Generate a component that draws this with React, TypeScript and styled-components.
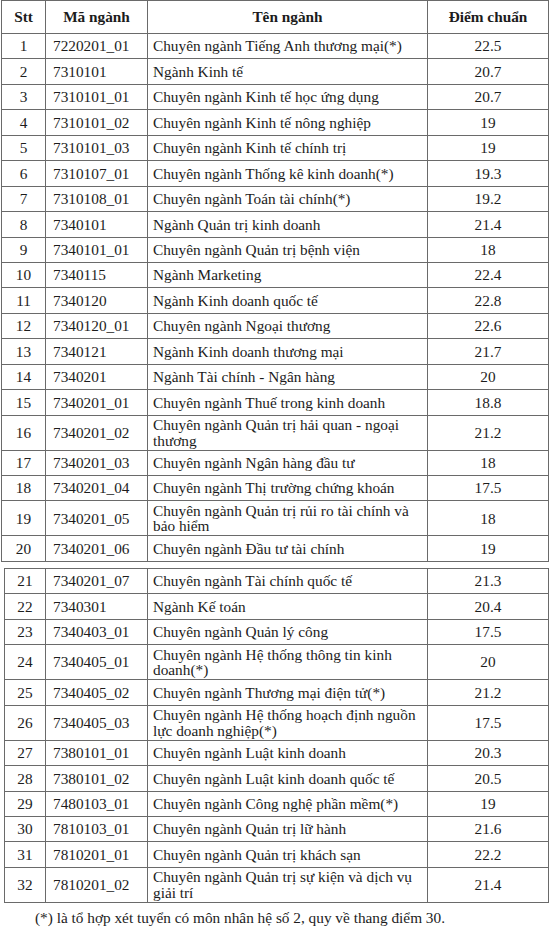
import React from "react";
import styled, { createGlobalStyle } from "styled-components";

const GlobalStyle = createGlobalStyle`
  html, body { margin: 0; padding: 0; background: #ffffff; }
  body { font-family: "Liberation Serif", "Times New Roman", serif; color: #1c1c1c; }
`;

type Row = { stt: number; code: string; name: string[]; score: string };

const part1: Row[] = [
  { stt: 1, code: "7220201_01", name: ["Chuyên ngành Tiếng Anh thương mại(*)"], score: "22.5" },
  { stt: 2, code: "7310101", name: ["Ngành Kinh tế"], score: "20.7" },
  { stt: 3, code: "7310101_01", name: ["Chuyên ngành Kinh tế học ứng dụng"], score: "20.7" },
  { stt: 4, code: "7310101_02", name: ["Chuyên ngành Kinh tế nông nghiệp"], score: "19" },
  { stt: 5, code: "7310101_03", name: ["Chuyên ngành Kinh tế chính trị"], score: "19" },
  { stt: 6, code: "7310107_01", name: ["Chuyên ngành Thống kê kinh doanh(*)"], score: "19.3" },
  { stt: 7, code: "7310108_01", name: ["Chuyên ngành Toán tài chính(*)"], score: "19.2" },
  { stt: 8, code: "7340101", name: ["Ngành Quản trị kinh doanh"], score: "21.4" },
  { stt: 9, code: "7340101_01", name: ["Chuyên ngành Quản trị bệnh viện"], score: "18" },
  { stt: 10, code: "7340115", name: ["Ngành Marketing"], score: "22.4" },
  { stt: 11, code: "7340120", name: ["Ngành Kinh doanh quốc tế"], score: "22.8" },
  { stt: 12, code: "7340120_01", name: ["Chuyên ngành Ngoại thương"], score: "22.6" },
  { stt: 13, code: "7340121", name: ["Ngành Kinh doanh thương mại"], score: "21.7" },
  { stt: 14, code: "7340201", name: ["Ngành Tài chính - Ngân hàng"], score: "20" },
  { stt: 15, code: "7340201_01", name: ["Chuyên ngành Thuế trong kinh doanh"], score: "18.8" },
  { stt: 16, code: "7340201_02", name: ["Chuyên ngành Quản trị hải quan - ngoại", "thương"], score: "21.2" },
  { stt: 17, code: "7340201_03", name: ["Chuyên ngành Ngân hàng đầu tư"], score: "18" },
  { stt: 18, code: "7340201_04", name: ["Chuyên ngành Thị trường chứng khoán"], score: "17.5" },
  { stt: 19, code: "7340201_05", name: ["Chuyên ngành Quản trị rủi ro tài chính và", "bảo hiểm"], score: "18" },
  { stt: 20, code: "7340201_06", name: ["Chuyên ngành Đầu tư tài chính"], score: "19" },
];

const part2: Row[] = [
  { stt: 21, code: "7340201_07", name: ["Chuyên ngành Tài chính quốc tế"], score: "21.3" },
  { stt: 22, code: "7340301", name: ["Ngành Kế toán"], score: "20.4" },
  { stt: 23, code: "7340403_01", name: ["Chuyên ngành Quản lý công"], score: "17.5" },
  { stt: 24, code: "7340405_01", name: ["Chuyên ngành Hệ thống thông tin kinh", "doanh(*)"], score: "20" },
  { stt: 25, code: "7340405_02", name: ["Chuyên ngành Thương mại điện tử(*)"], score: "21.2" },
  { stt: 26, code: "7340405_03", name: ["Chuyên ngành Hệ thống hoạch định nguồn", "lực doanh nghiệp(*)"], score: "17.5" },
  { stt: 27, code: "7380101_01", name: ["Chuyên ngành Luật kinh doanh"], score: "20.3" },
  { stt: 28, code: "7380101_02", name: ["Chuyên ngành Luật kinh doanh quốc tế"], score: "20.5" },
  { stt: 29, code: "7480103_01", name: ["Chuyên ngành Công nghệ phần mềm(*)"], score: "19" },
  { stt: 30, code: "7810103_01", name: ["Chuyên ngành Quản trị lữ hành"], score: "21.6" },
  { stt: 31, code: "7810201_01", name: ["Chuyên ngành Quản trị khách sạn"], score: "22.2" },
  { stt: 32, code: "7810201_02", name: ["Chuyên ngành Quản trị sự kiện và dịch vụ", "giải trí"], score: "21.4" },
];

const Page = styled.div`
  width: 550px;
  padding: 0 0 0 1px;
  box-sizing: border-box;
`;

const Table = styled.div<{ $inset: number; $gap: number }>`
  display: grid;
  grid-template-columns: ${(p) => 44 - p.$inset}px 102px 280px 121px;
  margin-left: ${(p) => p.$inset}px;
  margin-top: ${(p) => p.$gap}px;
  width: max-content;
  border-left: 1px solid #6a6a6a;
  border-top: 1px solid #6a6a6a;
`;

const Cell = styled.div<{ $h: number; $align: "left" | "center"; $bold?: boolean; $pad?: number }>`
  box-sizing: border-box;
  height: ${(p) => p.$h}px;
  border-right: 1px solid #6a6a6a;
  border-bottom: 1px solid #6a6a6a;
  display: flex;
  flex-direction: column;
  justify-content: center;
  align-items: ${(p) => (p.$align === "center" ? "center" : "flex-start")};
  padding-left: ${(p) => p.$pad ?? 0}px;
  font-size: 15.3px;
  line-height: 15.5px;
  font-weight: ${(p) => (p.$bold ? 700 : 400)};
  white-space: nowrap;
`;

const Line = styled.span`
  display: block;
`;

const Note = styled.div`
  font-size: 15.3px;
  padding-left: 34px;
  margin-top: 6px;
  line-height: 18px;
`;

const SINGLE = 25.45;
const DOUBLE = 35;

function Header() {
  return (
    <>
      <Cell $h={33} $align="center" $bold>Stt</Cell>
      <Cell $h={33} $align="center" $bold>Mã ngành</Cell>
      <Cell $h={33} $align="center" $bold>Tên ngành</Cell>
      <Cell $h={33} $align="center" $bold>Điểm chuẩn</Cell>
    </>
  );
}

function Rows({ rows }: { rows: Row[] }) {
  return (
    <>
      {rows.map((r) => {
        const h = r.name.length > 1 ? DOUBLE : SINGLE;
        return (
          <React.Fragment key={r.stt}>
            <Cell $h={h} $align="center">{r.stt}</Cell>
            <Cell $h={h} $align="left" $pad={7}>{r.code}</Cell>
            <Cell $h={h} $align="left" $pad={5}>
              {r.name.map((n, i) => (
                <Line key={i}>{n}</Line>
              ))}
            </Cell>
            <Cell $h={h} $align="center">{r.score}</Cell>
          </React.Fragment>
        );
      })}
    </>
  );
}

export default function App() {
  return (
    <Page>
      <GlobalStyle />
      <Table $inset={0} $gap={0}>
        <Header />
        <Rows rows={part1} />
      </Table>
      <Table $inset={3} $gap={6}>
        <Rows rows={part2} />
      </Table>
      <Note>(*) là tổ hợp xét tuyển có môn nhân hệ số 2, quy về thang điểm 30.</Note>
    </Page>
  );
}
